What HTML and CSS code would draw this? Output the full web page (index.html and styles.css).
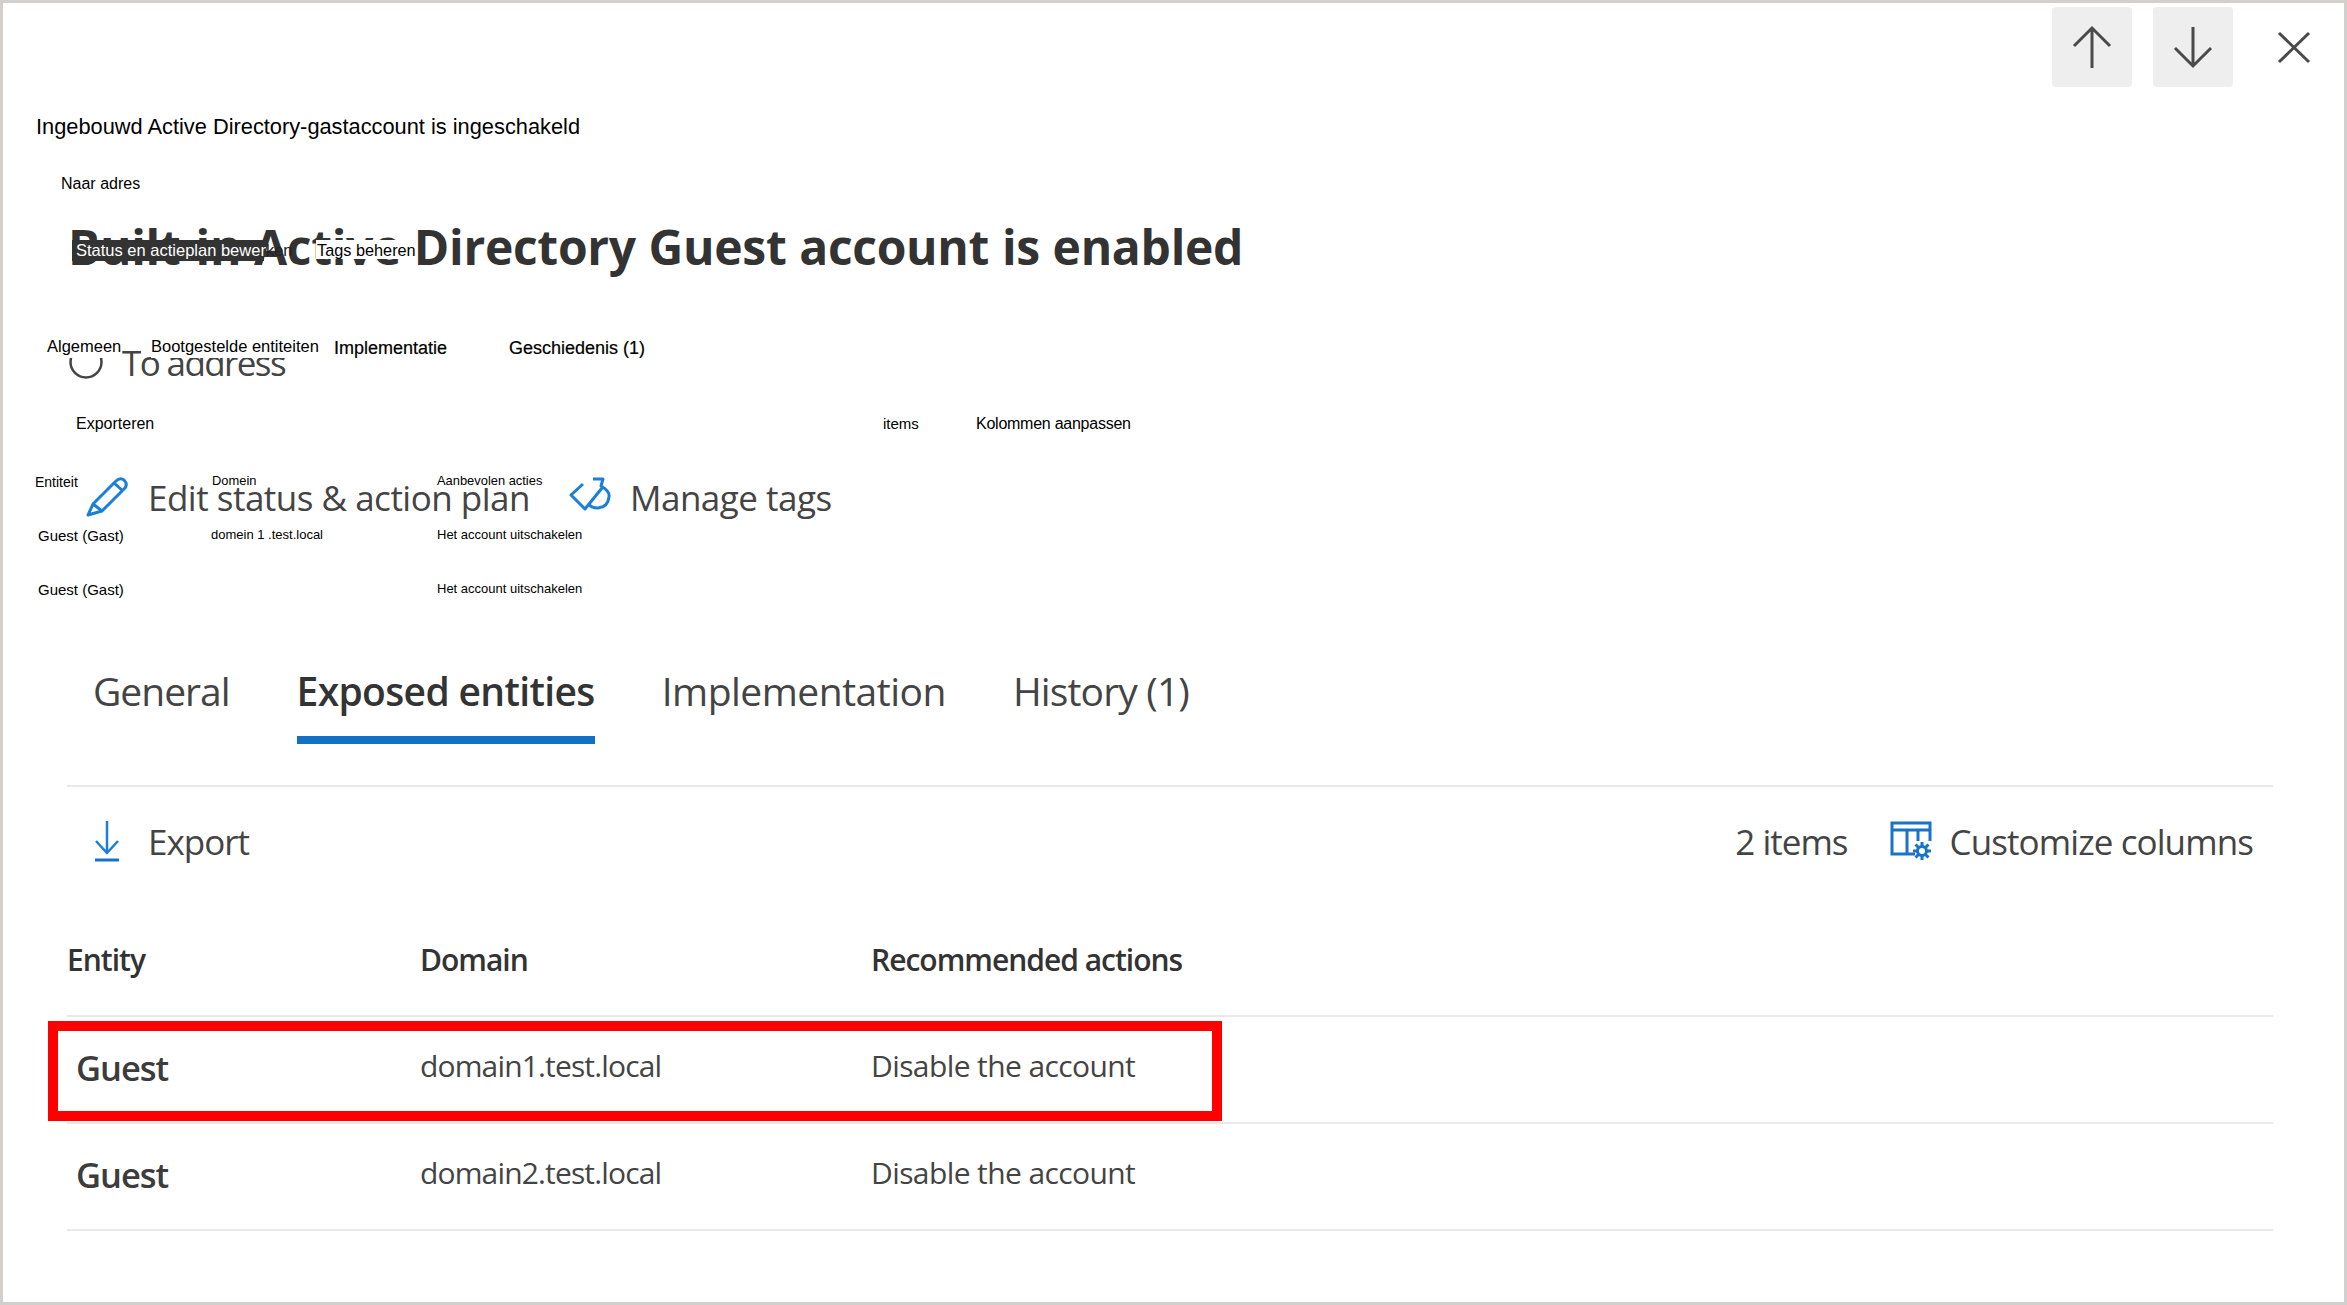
FILE: index.html
```html
<!DOCTYPE html>
<html lang="en">
<head>
<meta charset="utf-8">
<title>Built-in Active Directory Guest account is enabled</title>
<link rel="stylesheet" href="styles.css">
</head>
<body>
<main class="panel">
  <nav class="nav">
    <button class="nav-btn is-filled" aria-label="Previous"><svg class="nav-icon" viewBox="0 0 80 80"><path d="M22 39 40 21 58 39M40 21V61"/></svg></button>
    <button class="nav-btn is-filled" aria-label="Next"><svg class="nav-icon" viewBox="0 0 80 80"><path d="M22 41 40 59 58 41M40 20V59"/></svg></button>
    <button class="nav-btn" aria-label="Close"><svg class="nav-icon" viewBox="0 0 80 80"><path d="M25 26 55 55M55 26 25 55"/></svg></button>
  </nav>

  <h1 class="title">Built-in Active Directory Guest account is enabled</h1>

  <div class="status">
    <svg class="status-ring" viewBox="0 0 36 36"><circle cx="18" cy="18" r="15.5"/></svg>
    <span>To address</span>
  </div>

  <div class="actions">
    <span class="action action-edit">
      <svg class="icon-edit" viewBox="0 0 44 44"><path d="M2 40 7 29 30 6Q34 2 38 5 42 9 39 13L16 36ZM7 29 16 36M28 8 37 16"/></svg>
      <span>Edit status &amp; action plan</span>
    </span>
    <span class="action">
      <svg class="icon-tag" viewBox="0 0 44 40"><path d="M15 7 3 18 17 32 34 11M25 2H35L33 9Q42 14 41 20 40 30 30 31 23 31 21 27"/></svg>
      <span>Manage tags</span>
    </span>
  </div>

  <div class="tabs">
    <span class="tab tab-general">General</span>
    <span class="tab tab-active">Exposed entities</span>
    <span class="tab tab-impl">Implementation</span>
    <span class="tab">History (1)</span>
  </div>

  <div class="toolbar">
    <span class="tool">
      <svg class="icon-export" viewBox="0 0 26 42"><path d="M13 1V33M2 21 13 33 24 21"/><path class="icon-export-bar" d="M1 40H25"/></svg>
      <span>Export</span>
    </span>
    <span class="tool-right">
      <span class="count">2 items</span>
      <span class="tool tool-columns">
        <svg class="icon-columns" viewBox="0 0 42 40"><path d="M25 33H2V2H40V20M2 9H40M17 9V33M28 9V20"/><g class="gear"><circle cx="32" cy="30" r="4.5"/><path d="M32 21V25M32 35V39M23 30H27M37 30H41M25.500 23.500 28.500 26.500M35.500 33.500 38.500 36.500M38.500 23.500 35.500 26.500M28.500 33.500 25.500 36.500"/></g></svg>
        <span>Customize columns</span>
      </span>
    </span>
  </div>

  <div class="table">
    <div class="row row-head">
      <span class="cell">Entity</span><span class="cell">Domain</span><span class="cell">Recommended actions</span>
    </div>
    <div class="row">
      <span class="cell cell-entity">Guest</span><span class="cell">domain1.test.local</span><span class="cell cell-action">Disable the account</span>
    </div>
    <div class="row">
      <span class="cell cell-entity">Guest</span><span class="cell">domain2.test.local</span><span class="cell cell-action">Disable the account</span>
    </div>
  </div>

  <div class="highlight"></div>

  <span class="nl nl-title">Ingebouwd Active Directory-gastaccount is ingeschakeld</span>
  <span class="nl nl-address">Naar adres</span>
  <span class="nl nl-edit">Status en actieplan bewer<span class="nl-tail">ken</span></span>
  <span class="nl nl-tags">Tags beheren</span>
  <span class="nl nl-general">Algemeen</span>
  <span class="nl nl-exposed">Bootgestelde entiteiten</span>
  <span class="nl nl-impl">Implementatie</span>
  <span class="nl nl-history">Geschiedenis (1)</span>
  <span class="nl nl-export">Exporteren</span>
  <span class="nl nl-items">items</span>
  <span class="nl nl-columns">Kolommen aanpassen</span>
  <span class="nl nl-th nl-th-entity">Entiteit</span>
  <span class="nl nl-th nl-th-domain">Domein</span>
  <span class="nl nl-th nl-th-action">Aanbevolen acties</span>
  <span class="nl nl-guest nl-guest-1">Guest (Gast)</span>
  <span class="nl nl-td nl-domain-1">domein 1 .test.local</span>
  <span class="nl nl-td nl-action-1">Het account uitschakelen</span>
  <span class="nl nl-guest nl-guest-2">Guest (Gast)</span>
  <span class="nl nl-td nl-action-2">Het account uitschakelen</span>
</main>
</body>
</html>
```

FILE: styles.css
```css
* { box-sizing: border-box; }
html, body { margin: 0; padding: 0; background: #fff; }
.panel {
  position: relative;
  width: 2347px;
  height: 1305px;
  overflow: hidden;
  border: 3px solid #d2cfcc;
  background: #fff;
  font-family: "Open Sans", "Noto Sans", sans-serif;
  color: #333;
}

/* top navigation */
.nav { display: flex; justify-content: flex-end; gap: 21px; padding: 4px 10px 0 0; }
.nav-btn { width: 80px; height: 80px; padding: 0; border: 0; border-radius: 4px; background: transparent; }
.nav-btn.is-filled { background: #eee; }
.nav-icon { display: block; width: 80px; height: 80px; fill: none; stroke: #4a4a4a; stroke-width: 3; }

/* heading */
.title { margin: 130px 0 0 65px; font-size: 48px; line-height: 60px; font-weight: 700; letter-spacing: -0.3px; word-spacing: 0.6px; white-space: nowrap; }

.status { display: flex; align-items: center; gap: 18px; margin: 60px 0 0 65px; height: 50px; font-size: 35px; letter-spacing: -1.6px; color: #444; }
.status-ring { width: 36px; height: 36px; fill: none; stroke: #444; stroke-width: 2.500; }

.actions { display: flex; align-items: center; gap: 38px; margin: 85px 0 0 83px; height: 50px; font-size: 35px; letter-spacing: -0.5px; color: #444; }
.action { display: flex; align-items: center; gap: 18px; }
.icon-edit, .icon-tag { fill: none; stroke: #1a7fd8; stroke-width: 3; stroke-linejoin: round; }
.icon-edit { width: 44px; height: 44px; }
.icon-tag { width: 44px; height: 40px; }

/* tabs */
.tabs { display: flex; gap: 67px; margin: 138px 0 0 64px; padding: 0 0 41px 26px; width: 2206px; border-bottom: 2px solid #e8e8e8; font-size: 39px; letter-spacing: -0.85px; color: #444; }
.tab { height: 62px; line-height: 62px; white-space: nowrap; }
.tab-general { letter-spacing: -1px; }
.tab-impl { letter-spacing: -0.5px; }
.tab-active { font-weight: 600; color: #333; letter-spacing: -0.65px; border-bottom: 8px solid #1271c4; height: 84px; }

/* toolbar */
.toolbar { display: flex; justify-content: space-between; align-items: center; margin: 21px 0 0 64px; width: 2206px; padding: 0 20px 0 27px; height: 66px; font-size: 35px; letter-spacing: -1px; color: #444; }
.tool { display: flex; align-items: center; gap: 28px; }
.tool-columns { gap: 18px; letter-spacing: -0.9px; }
.tool-right { display: flex; align-items: center; gap: 42px; }
.icon-export { width: 26px; height: 42px; fill: none; stroke: #1a7fd8; stroke-width: 2.500; }
.icon-export-bar { stroke: #1271c4; stroke-width: 3; }
.icon-columns { width: 42px; height: 40px; fill: none; stroke: #1a73c4; stroke-width: 3; }

/* table */
.table { margin: 35px 0 0 64px; width: 2206px; }
.row { display: grid; grid-template-columns: 353px 451px 1fr; align-items: center; height: 107px; border-bottom: 2px solid #e9e9e9; font-size: 30px; letter-spacing: -0.85px; color: #444; }
.row .cell { padding-bottom: 9px; }
.row-head { height: 108px; font-weight: 600; letter-spacing: -1px; color: #333; }
.row-head .cell { padding-bottom: 5px; }
.row .cell-entity { padding: 0 0 4px 9px; font-size: 34.5px; letter-spacing: -1px; font-weight: 600; color: #3c3c3c; }
.cell-action { letter-spacing: -0.6px; }

.highlight { position: absolute; left: 45px; top: 1018px; width: 1174px; height: 100px; border: 10px solid #f00; }

/* translated labels laid over the page */
.nl { position: absolute; white-space: nowrap; font-family: "Liberation Sans", Arial, sans-serif; color: #000; line-height: 1; }
.nl-title { left: 33px; top: 113px; font-size: 21.800px; }
.nl-address { left: 58px; top: 173px; font-size: 16px; }
.nl-edit { left: 69px; top: 237px; height: 21px; width: 192px; padding: 2px 0 0 4px; font-size: 16.500px; color: #fff; background: #333; }
.nl-tail { color: #222; }
.nl-tags { left: 313px; top: 237px; height: 19px; padding: 2px 0 0 1px; font-size: 16.300px; background: #fff; }
.nl-general { left: 44px; top: 335px; height: 20px; padding-right: 1px; font-size: 16.500px; background: #fff; }
.nl-exposed { left: 148px; top: 335px; height: 20px; padding-right: 1px; font-size: 16.500px; background: #fff; }
.nl-impl { left: 331px; top: 336px; font-size: 18px; -webkit-text-stroke: 0.2px #000; }
.nl-history { left: 506px; top: 336px; font-size: 18px; -webkit-text-stroke: 0.2px #000; }
.nl-export { left: 73px; top: 413px; font-size: 16px; }
.nl-items { left: 880px; top: 413px; font-size: 15px; }
.nl-columns { left: 973px; top: 413px; font-size: 16px; letter-spacing: -0.25px; }
.nl-th { top: 472px; font-size: 12.900px; background: #fff; }
.nl-th-entity { left: 32px; font-size: 14px; }
.nl-th-domain { left: 209px; }
.nl-th-action { left: 434px; }
.nl-guest { font-size: 15px; left: 35px; }
.nl-td { font-size: 13px; }
.nl-guest-1 { top: 525px; }
.nl-domain-1 { left: 208px; top: 525px; }
.nl-action-1 { left: 434px; top: 525px; }
.nl-guest-2 { top: 579px; }
.nl-action-2 { left: 434px; top: 579px; }
```
